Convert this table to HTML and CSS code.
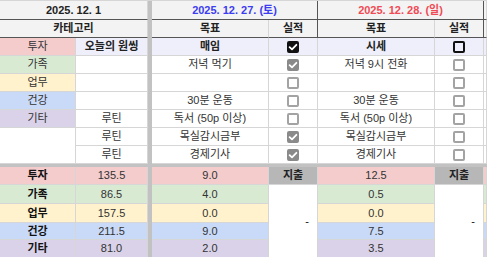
FILE: index.html
```html
<!DOCTYPE html>
<html lang="ko">
<head>
<meta charset="utf-8">
<link rel="stylesheet" href="styles.css">
</head>
<body>
<div class="sheet">
  <div class="vsep"></div>
  <div class="hsep"></div>

  <!-- row 1 -->
  <div class="cell hd h1 c2 b">2025. 12. 1</div>
  <div class="cell hd h1 c2 b blue dk">2025. 12. 27. (토)</div>
  <div class="cell hd h1 c2 b red dk">2025. 12. 28. (일)</div>
  <div class="cell hd h1"></div>

  <!-- row 2 -->
  <div class="cell hd h2 c2 b">카테고리</div>
  <div class="cell hd h2 b">목표</div>
  <div class="cell hd h2 b dk">실적</div>
  <div class="cell hd h2 b">목표</div>
  <div class="cell hd h2 b dk">실적</div>
  <div class="cell hd h2"></div>

  <!-- row 3 -->
  <div class="cell pink">투자</div>
  <div class="cell hl b">오늘의 원씽</div>
  <div class="cell hl b">매임</div>
  <div class="cell hl"><span class="cb dark on"><svg viewBox="0 0 12 12"><polyline points="2.6,6.1 5,8.4 9.4,3.8"/></svg></span></div>
  <div class="cell hl b">시세</div>
  <div class="cell hl"><span class="cb dark"></span></div>
  <div class="cell hl"></div>

  <!-- row 4 -->
  <div class="cell green">가족</div>
  <div class="cell"></div>
  <div class="cell">저녁 먹기</div>
  <div class="cell"><span class="cb on"><svg viewBox="0 0 12 12"><polyline points="2.6,6.1 5,8.4 9.4,3.8"/></svg></span></div>
  <div class="cell">저녁 9시 전화</div>
  <div class="cell"><span class="cb"></span></div>
  <div class="cell"></div>

  <!-- row 5 -->
  <div class="cell yellow">업무</div>
  <div class="cell"></div>
  <div class="cell"></div>
  <div class="cell"><span class="cb"></span></div>
  <div class="cell"></div>
  <div class="cell"><span class="cb"></span></div>
  <div class="cell"></div>

  <!-- row 6 -->
  <div class="cell blue-bg">건강</div>
  <div class="cell"></div>
  <div class="cell">30분 운동</div>
  <div class="cell"><span class="cb"></span></div>
  <div class="cell">30분 운동</div>
  <div class="cell"><span class="cb"></span></div>
  <div class="cell"></div>

  <!-- row 7 -->
  <div class="cell purple">기타</div>
  <div class="cell">루틴</div>
  <div class="cell">독서 (50p 이상)</div>
  <div class="cell"><span class="cb"></span></div>
  <div class="cell">독서 (50p 이상)</div>
  <div class="cell"><span class="cb"></span></div>
  <div class="cell"></div>

  <!-- row 8 -->
  <div class="cell r2"></div>
  <div class="cell">루틴</div>
  <div class="cell">목실감시금부</div>
  <div class="cell"><span class="cb on"><svg viewBox="0 0 12 12"><polyline points="2.6,6.1 5,8.4 9.4,3.8"/></svg></span></div>
  <div class="cell">목실감시금부</div>
  <div class="cell"><span class="cb"></span></div>
  <div class="cell"></div>

  <!-- row 9 -->
  <div class="cell">루틴</div>
  <div class="cell">경제기사</div>
  <div class="cell"><span class="cb on"><svg viewBox="0 0 12 12"><polyline points="2.6,6.1 5,8.4 9.4,3.8"/></svg></span></div>
  <div class="cell">경제기사</div>
  <div class="cell"><span class="cb"></span></div>
  <div class="cell"></div>

  <!-- summary rows -->
  <div class="cell pink b sum">투자</div>
  <div class="cell pink">135.5</div>
  <div class="cell pink">9.0</div>
  <div class="cell grey b">지출</div>
  <div class="cell pink">12.5</div>
  <div class="cell grey b">지출</div>
  <div class="cell pink"></div>

  <div class="cell green b sum">가족</div>
  <div class="cell green">86.5</div>
  <div class="cell green">4.0</div>
  <div class="cell r4 dash">-</div>
  <div class="cell green">0.5</div>
  <div class="cell r4 dash">-</div>
  <div class="cell green"></div>

  <div class="cell yellow b sum">업무</div>
  <div class="cell yellow">157.5</div>
  <div class="cell yellow">0.0</div>
  <div class="cell yellow">0.0</div>
  <div class="cell yellow"></div>

  <div class="cell blue-bg b sum">건강</div>
  <div class="cell blue-bg">211.5</div>
  <div class="cell blue-bg">9.0</div>
  <div class="cell blue-bg">7.5</div>
  <div class="cell blue-bg"></div>

  <div class="cell purple b sum">기타</div>
  <div class="cell purple">81.0</div>
  <div class="cell purple">2.0</div>
  <div class="cell purple">3.5</div>
  <div class="cell purple"></div>
</div>
</body>
</html>
```

FILE: styles.css
```css
html, body {
  margin: 0;
  padding: 0;
  background: #ffffff;
  overflow: hidden;
}

.sheet {
  display: grid;
  grid-template-columns: 76px 72px 4px 117px 49px 117px 49px 1fr;
  grid-template-rows: 19px 18px 18px 18px 18px 18px 18px 18px 18px 3px 18px 19px 19px 17px 18px;
  border-top: 1px solid #d6d6d6;
  width: 487px;
  height: 257px;
  overflow: hidden;
  font-family: "Liberation Sans", "Noto Sans CJK KR", sans-serif;
  font-size: 11px;
  color: #333333;
}

.vsep {
  grid-column: 3;
  grid-row: 1 / -1;
  background: #c2c2c2;
}

.hsep {
  grid-column: 1 / -1;
  grid-row: 10;
  background: #c2c2c2;
}

.cell {
  box-sizing: border-box;
  border-right: 1px solid #d6d6d6;
  border-bottom: 1px solid #d6d6d6;
  display: flex;
  align-items: center;
  justify-content: center;
  white-space: nowrap;
  overflow: hidden;
  background: #ffffff;
  line-height: 1;
}

.c2 { grid-column: span 2; }
.r2 { grid-row: span 2; }
.r4 { grid-row: span 4; }

.hd { background: #f3f3f3; color: #222222; }
.h1, .h2 { border-bottom-color: #555555; }
.dk { border-right-color: #555555; }

.b { font-weight: bold; color: #222222; }
.blue { color: #3c3cf0; }
.red { color: #f04a55; }

.hl { background: #eeeffb; }
.pink { background: #f4cccc; }
.green { background: #d9ead3; }
.yellow { background: #fff2cc; }
.blue-bg { background: #c9daf8; }
.purple { background: #d9d2e9; }
.grey { background: #b7b7b7; }
.sum { color: #111111; }

.dash {
  justify-content: flex-end;
  padding-right: 8px;
  color: #111111;
}

.cb {
  box-sizing: border-box;
  width: 12px;
  height: 12px;
  border: 2px solid #a3a3a3;
  border-radius: 2px;
  display: block;
}

.cb.dark { border-color: #111111; }
.cb.on { background: #8a8a8a; border-color: #8a8a8a; }
.cb.dark.on { background: #111111; border-color: #111111; }

.cb svg {
  display: block;
  width: 12px;
  height: 12px;
  margin: -2px;
}

.cb polyline {
  fill: none;
  stroke: #ffffff;
  stroke-width: 1.8;
  stroke-linecap: round;
  stroke-linejoin: round;
}
```
